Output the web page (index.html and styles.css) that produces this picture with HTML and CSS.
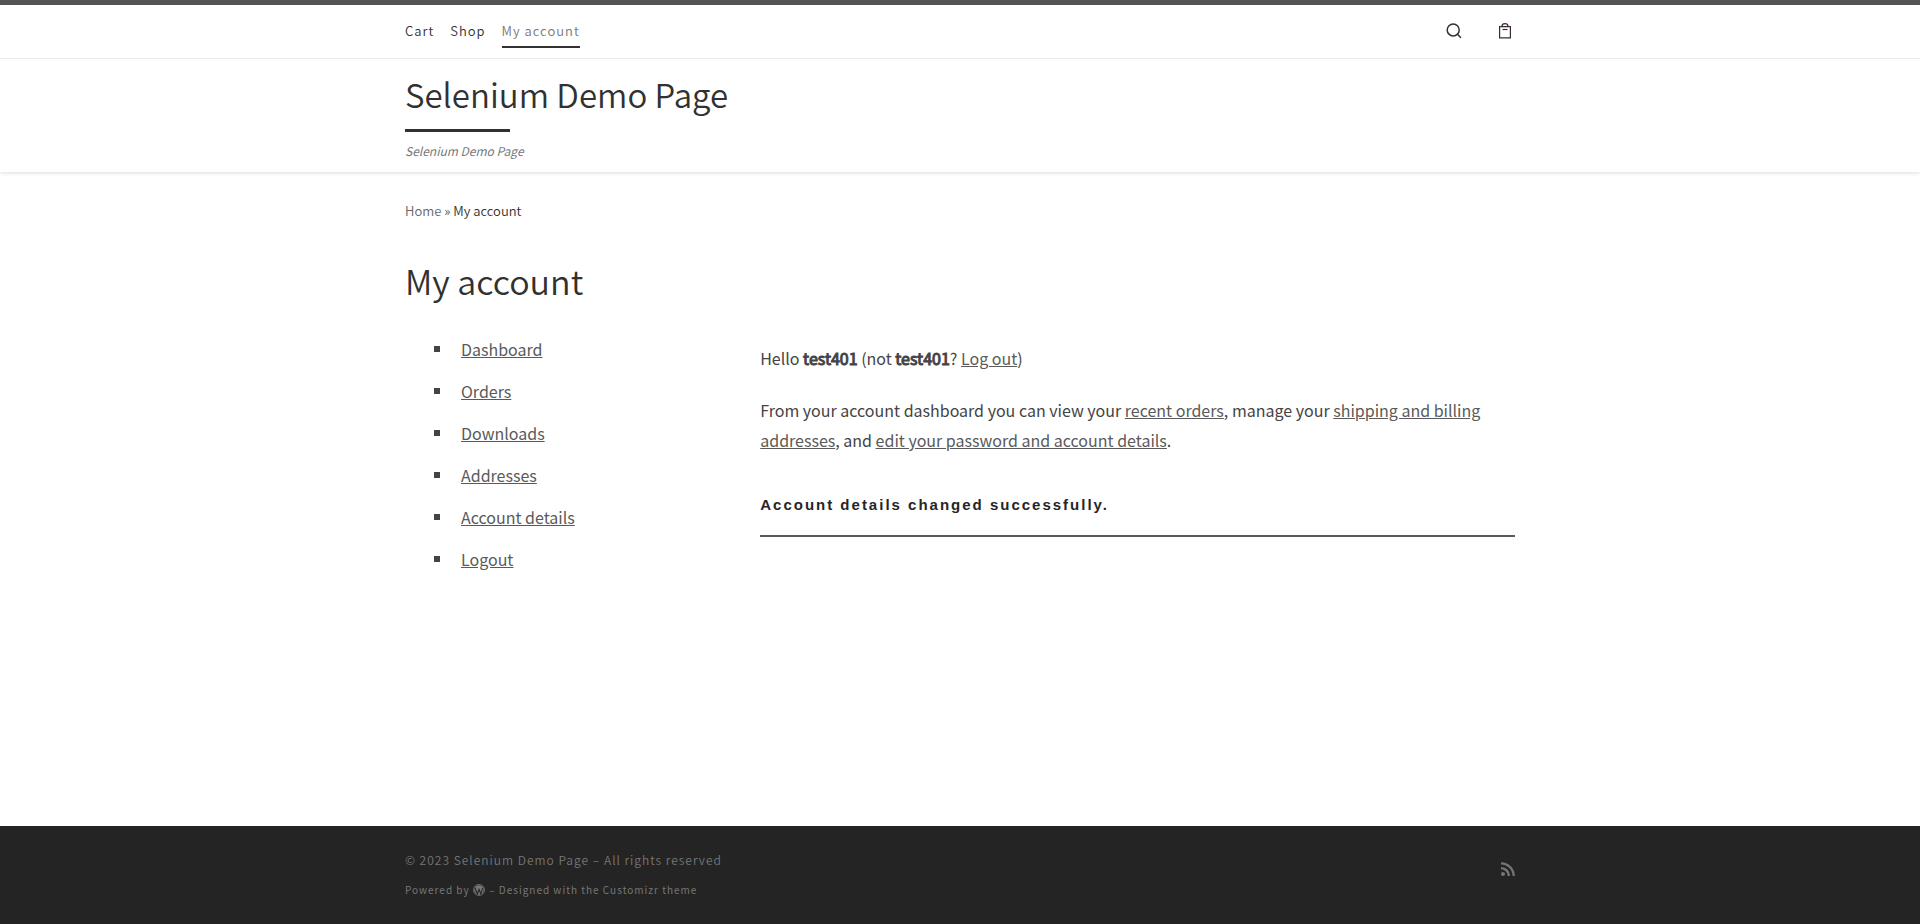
FILE: index.html
```html
<!DOCTYPE html>
<html lang="en">
<head>
<meta charset="utf-8">
<meta name="viewport" content="width=device-width, initial-scale=1">
<title>My account – Selenium Demo Page</title>
<link rel="stylesheet" href="styles.css">
</head>
<body>
<header class="site-header">
  <div class="topbar">
    <div class="container topbar-inner">
      <nav class="main-nav" aria-label="Main">
        <a href="#">Cart</a>
        <a href="#">Shop</a>
        <a href="#" class="current" aria-current="page">My account</a>
      </nav>
      <div class="tools">
        <button type="button" class="tool" aria-label="Search">
          <svg width="16" height="16" viewBox="0 0 16 16" fill="none" stroke="#313131" stroke-width="1.5"><circle cx="7.2" cy="6.9" r="6"/><path d="M11.4 11.2L15 14.8"/></svg>
        </button>
        <a href="#" class="tool" aria-label="View cart">
          <svg width="12" height="16" viewBox="0 0 12 16" fill="none" stroke="#3b2a3a" stroke-width="1.2"><path d="M.6 3.600h10.8v11.200H.6z"/><path d="M2.900 3.500C3 1.700 4.300 .7 6 .7S9 1.700 9.100 3.500"/><path d="M3.500 6.500h5"/></svg>
        </a>
      </div>
    </div>
  </div>
  <div class="container branding">
    <a href="#" class="site-title">Selenium Demo Page</a>
    <p class="tagline">Selenium Demo Page</p>
  </div>
</header>

<main class="container main">
  <nav class="breadcrumb" aria-label="Breadcrumb"><a href="#">Home</a> » <span>My account</span></nav>
  <h1 class="page-title">My account</h1>
  <div class="account">
    <nav class="account-nav" aria-label="Account pages">
      <ul>
        <li><a href="#">Dashboard</a></li>
        <li><a href="#">Orders</a></li>
        <li><a href="#">Downloads</a></li>
        <li><a href="#">Addresses</a></li>
        <li><a href="#">Account details</a></li>
        <li><a href="#">Logout</a></li>
      </ul>
    </nav>
    <section class="account-content">
      <p>Hello <strong>test401</strong> (not <strong>test401</strong>? <a href="#">Log out</a>)</p>
      <p>From your account dashboard you can view your <a href="#">recent orders</a>, manage your <a href="#">shipping and billing addresses</a>, and <a href="#">edit your password and account details</a>.</p>
      <div class="notice" role="status">Account details changed successfully.</div>
    </section>
  </div>
</main>

<footer class="site-footer">
  <div class="container footer-inner">
    <div class="credits">
      <p class="copyright">© 2023 <a href="#">Selenium Demo Page</a> – All rights reserved</p>
      <p class="powered">Powered by <a href="#" aria-label="WordPress"><svg class="wp" width="12" height="12" viewBox="0 0 16 16"><circle cx="8" cy="8" r="7.500" fill="none" stroke="#777" stroke-width="1"/><circle cx="8" cy="8" r="6.500" fill="#777"/><path d="M2.600 5L5.800 13.200L8 7L10.300 13.200L13 5.500" fill="none" stroke="#242424" stroke-width="1.400"/></svg></a> – Designed with the <a href="#">Customizr theme</a></p>
    </div>
    <a href="#" class="rss" aria-label="RSS feed">
      <svg width="14" height="14" viewBox="0 0 14 14" fill="none" stroke="#777" stroke-width="2.300"><circle cx="2" cy="12" r="2" fill="#777" stroke="none"/><path d="M0 6.100a7.900 7.900 0 0 1 7.900 7.900M0 1.300A12.700 12.700 0 0 1 12.700 14"/></svg>
    </a>
  </div>
</footer>
</body>
</html>
```
FILE: styles.css
```css
* { box-sizing: border-box; }

body {
  display: flex;
  flex-direction: column;
  min-height: 100vh;
  margin: 0;
  border-top: 5px solid #545454;
  background: #fff;
  color: #444;
  font: 16px/30px "Noto Sans CJK SC", "Noto Sans", sans-serif;
}

p { margin: 0; }
a { color: #5a5a5a; }

.container {
  width: 100%;
  max-width: 1140px;
  margin: 0 auto;
  padding: 0 15px;
}

.site-header { box-shadow: 0 1px 4px rgba(0, 0, 0, 0.14); }
.topbar { border-bottom: 1px solid #eaeaea; }
.topbar-inner {
  display: flex;
  justify-content: space-between;
  align-items: center;
  height: 53px;
}
.main-nav { display: flex; gap: 16px; }
.main-nav a {
  margin-top: 6px;
  padding-bottom: 5px;
  border-bottom: 2px solid transparent;
  color: #313131;
  font-size: 13px;
  font-weight: 350;
  line-height: 20px;
  letter-spacing: 1px;
  text-decoration: none;
}
.main-nav .current { border-color: #313131; color: #777; }
.tools { display: flex; gap: 37px; padding-right: 4px; }
.tool {
  display: flex;
  padding: 0 0 1px;
  border: 0;
  background: none;
  cursor: pointer;
}

.branding { padding-top: 10px; padding-bottom: 9px; }
.site-title {
  display: block;
  color: #313131;
  font-size: 33px;
  font-weight: 350;
  line-height: 50px;
  text-decoration: none;
}
.site-title::after {
  content: "";
  display: block;
  width: 105px;
  height: 3px;
  margin: 10px 0 7px;
  background: #313131;
}
.tagline {
  color: #777;
  font-size: 12px;
  font-style: italic;
  line-height: 24px;
}

.main { flex: 1; padding-top: 27px; }
.breadcrumb { color: #444; font-size: 13px; font-weight: 350; line-height: 24px; }
.breadcrumb a { color: #666; text-decoration: none; }
.breadcrumb span { color: #313131; }
.page-title {
  margin: 33px 0 28px;
  color: #313131;
  font-size: 34px;
  font-weight: 350;
  line-height: 50px;
}

.account { display: flex; justify-content: space-between; }
.account-nav { width: 30%; }
.account-nav ul { margin: 0; padding-left: 29px; list-style: none; }
.account-nav li {
  display: flex;
  align-items: center;
  gap: 21px;
  margin-bottom: 12px;
}
.account-nav li::before {
  content: "";
  width: 6px;
  height: 6px;
  background: #444;
}
.account-content { width: 68%; padding-top: 9px; }
.account-content p { margin-bottom: 22px; }
.account-content strong { font-weight: 400; -webkit-text-stroke: 1px; }
.notice {
  margin-top: 26px;
  padding: 14px 0 20px;
  border-bottom: 2px solid #5a5a5a;
  color: #252525;
  font: bold 15px/20px "Liberation Sans", Arial, sans-serif;
  letter-spacing: 2px;
}

.site-footer { background: #242424; color: #777; letter-spacing: 1px; }
.site-footer a { color: inherit; text-decoration: none; }
.footer-inner {
  display: flex;
  justify-content: space-between;
  align-items: center;
  padding-top: 19px;
  padding-bottom: 19px;
}
.copyright { font-size: 12px; font-weight: 350; line-height: 30px; }
.powered { font-size: 10px; line-height: 30px; }
.wp { margin-right: 1px; vertical-align: -2px; }
.rss { display: flex; margin-bottom: 12px; }
```
